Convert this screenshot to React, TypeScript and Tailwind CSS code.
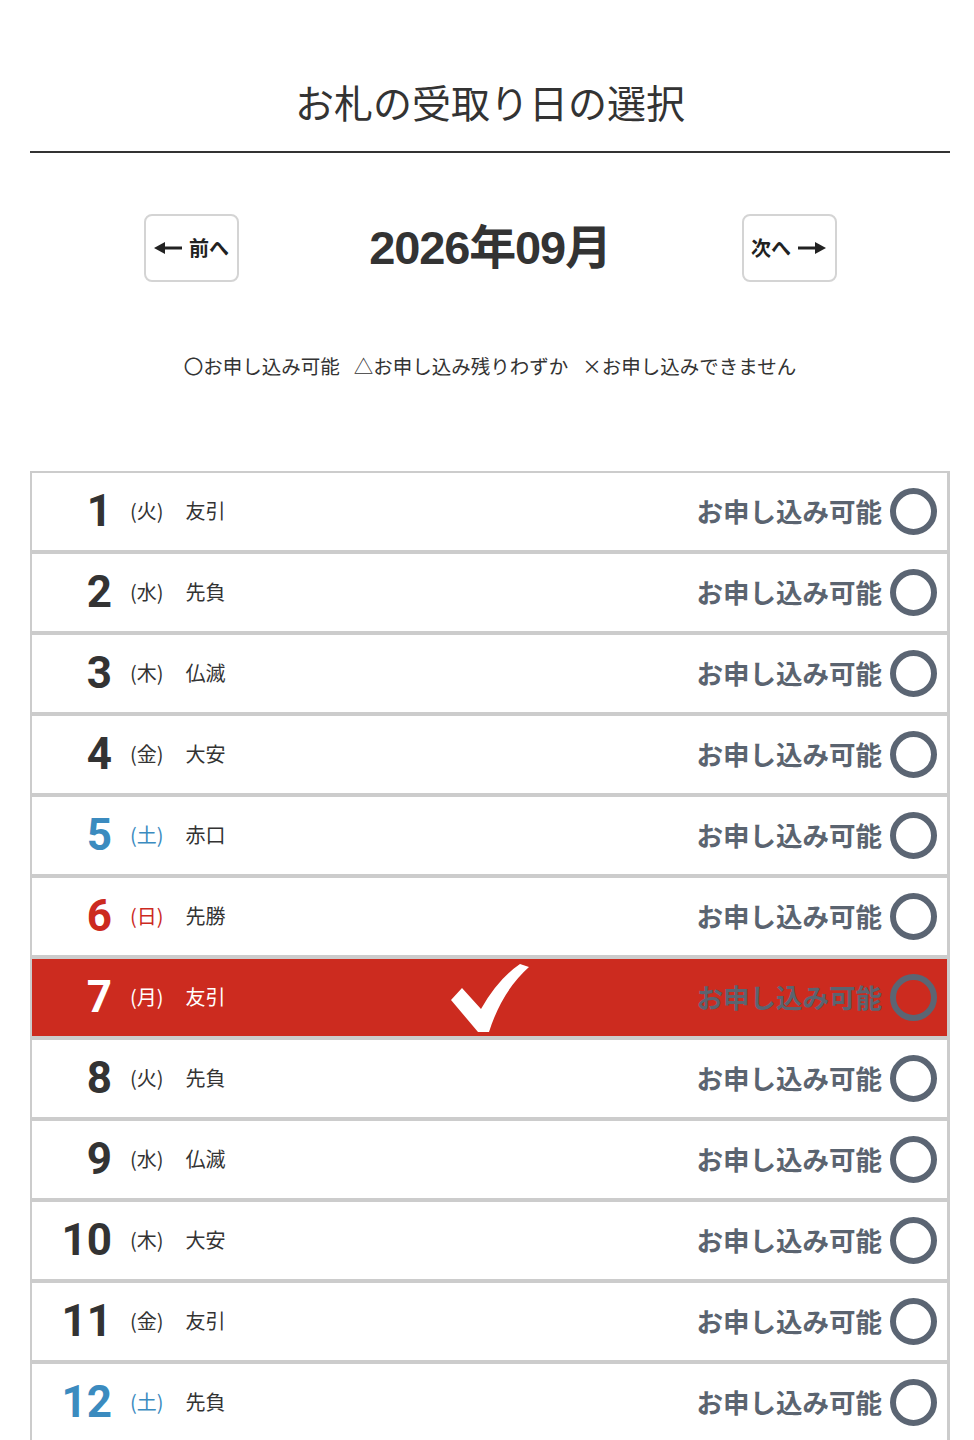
import { useState } from "react";

const WEEK = ["日", "月", "火", "水", "木", "金", "土"];
const ROKUYO = ["先勝", "友引", "先負", "仏滅", "大安", "赤口"];

// 2026年9月: 1日は火曜, 11日から旧暦8月(友引始まり)
const DAYS = Array.from({ length: 30 }, (_, i) => {
  const d = i + 1;
  const w = (d + 1) % 7;
  const r = d < 11 ? d % 6 : (d - 11 + 1) % 6;
  return { d, w, rokuyo: ROKUYO[r] };
});

const SANS = { fontFamily: '"Noto Sans CJK JP", "Noto Sans", sans-serif' };

function Arrow({ dir }: { dir: "left" | "right" }) {
  return (
    <svg width="30" height="14" viewBox="0 0 30 14" className={dir === "left" ? "" : "rotate-180"}>
      <path d="M10 7 H29" stroke="#222" strokeWidth="3" />
      <path d="M1 7 L12 1 V13 Z" fill="#222" />
    </svg>
  );
}

function Check() {
  return (
    <svg width="80" height="72" viewBox="0 0 80 72">
      <path d="M1 39 L12 27 L31 48 Q48 18 70 3 L79 6 Q52 30 39 71 L28 71 Z" fill="#fff" />
    </svg>
  );
}

export default function App() {
  const [selected, setSelected] = useState(7);

  return (
    <div className="min-h-screen bg-white text-[#333]" style={SANS}>
      <div className="ml-[30px] w-[920px]">
        <h1
          className="pt-[80px] pb-[21px] text-center text-[39px] leading-[50px] text-[#333] border-b-2 border-[#333]"
          style={{ fontFamily: '"Liberation Serif", "Noto Sans CJK JP", serif' }}
        >
          お札の受取り日の選択
        </h1>

        <div className="mt-[60px] flex justify-center items-center">
          <button className="w-[95px] h-[68px] border-2 border-[#d4d4d4] rounded-lg flex items-center justify-center gap-[6px] text-[20px] font-bold text-[#222]">
            <Arrow dir="left" />
            <span>前へ</span>
          </button>
          <div
            className="w-[503px] text-center text-[47px] font-bold tracking-tight text-[#333]"
            style={{ fontFamily: '"Liberation Sans", "Noto Sans CJK JP", sans-serif' }}
          >
            2026年09月
          </div>
          <button className="w-[95px] h-[68px] border-2 border-[#d4d4d4] rounded-lg flex items-center justify-center gap-[6px] text-[20px] font-bold text-[#222]">
            <span>次へ</span>
            <Arrow dir="right" />
          </button>
        </div>

        <p className="mt-[68px] text-center text-[19.5px] leading-[28px] text-[#333]">
          <span>〇お申し込み可能</span>
          <span className="ml-[14px]">△お申し込み残りわずか</span>
          <span className="ml-[14px]">×お申し込みできません</span>
        </p>

        <div className="mt-[91px] border-t-2 border-l-2 border-r-[3px] border-[#cccccc]">
          {DAYS.map(day => {
            const sel = day.d === selected;
            const color = sel ? "text-white" : day.w === 6 ? "text-[#3b8bbf]" : day.w === 0 ? "text-[#cc2a1f]" : "text-[#333]";
            return (
              <div
                key={day.d}
                onClick={() => setSelected(day.d)}
                className={`relative h-[81px] flex items-center border-b-4 border-[#cccccc] cursor-pointer ${sel ? "bg-[#cc2b1f]" : "bg-white"}`}
              >
                <span
                  className={`w-[80px] text-right text-[44px] font-bold leading-none ${color}`}
                  style={{ fontFamily: 'Roboto, "Noto Sans CJK JP", sans-serif' }}
                >
                  {day.d}
                </span>
                <span className={`ml-[18px] text-[20px] ${color}`}>({WEEK[day.w]})</span>
                <span className={`ml-[22px] text-[20px] ${sel ? "text-white" : "text-[#333]"}`}>{day.rokuyo}</span>
                <div className="ml-auto mr-[10px] flex items-center gap-[8px]">
                  <span className="text-[26.5px] font-bold text-[#5b6470]">お申し込み可能</span>
                  <span className="w-[47px] h-[47px] rounded-full border-[6px] border-[#5b6573]" />
                </div>
                {sel && (
                  <div className="absolute left-1/2 top-1/2 -translate-x-1/2 -translate-y-1/2">
                    <Check />
                  </div>
                )}
              </div>
            );
          })}
        </div>
      </div>
    </div>
  );
}
